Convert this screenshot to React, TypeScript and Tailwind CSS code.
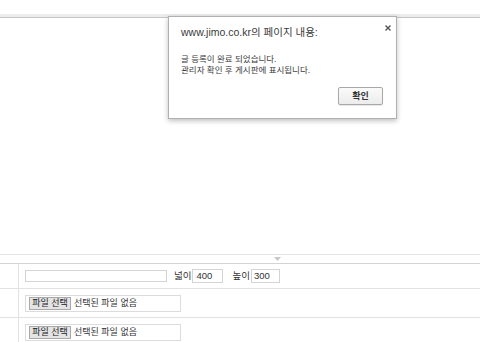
import React from "react";

const kr = { fontFamily: '"Liberation Sans", "Noto Sans CJK KR", sans-serif' };

function FileInput() {
  return (
    <div className="flex h-[17px] w-[156px] items-center border border-[#dcdcdc] bg-white pl-[3px]">
      <div className="flex h-[13px] w-[42px] items-center justify-center border border-[#a9a9a9] bg-[#e4e4e4] text-[9px] leading-none text-[#222]">
        파일 선택
      </div>
      <span className="ml-[3px] text-[9px] leading-none text-[#333]">선택된 파일 없음</span>
    </div>
  );
}

export default function App() {
  return (
    <div className="relative h-[342px] w-[480px] overflow-hidden bg-white" style={kr}>
      <div className="flex h-full flex-col">
        <div className="h-[14px]" />
        <div className="h-[4px] border-b border-[#c4c4c4] bg-[#ececec]" />
        <div className="h-[236px]" />
        <div className="h-px bg-[#e4e4e4]" />
        <div className="relative h-[8px] bg-white">
          <svg className="absolute left-[274px] top-[2px]" width="7" height="4" viewBox="0 0 7 4">
            <path d="M0 0 L7 0 L3.5 4 Z" fill="#c8c8c8" />
          </svg>
        </div>
        <div className="h-px bg-[#d4d4d4]" />
        {/* row 1 */}
        <div className="flex h-[25px] border-b border-[#e2e2e2]">
          <div className="w-[19px] border-r border-[#e2e2e2]" />
          <div className="flex items-center pl-[6px] text-[9.5px] text-[#333]">
            <div className="h-[12px] w-[142px] border border-[#d4d4d4] bg-white" />
            <span className="ml-[7px]">넓이</span>
            <div className="ml-[1px] flex h-[14px] w-[31px] items-center border border-[#d4d4d4] pl-[3px] leading-none">400</div>
            <span className="ml-[9px]">높이</span>
            <div className="ml-[1px] flex h-[14px] w-[29px] items-center border border-[#d4d4d4] pl-[2px] leading-none">300</div>
          </div>
        </div>
        {/* row 2 */}
        <div className="flex h-[29px] border-b border-[#e2e2e2]">
          <div className="w-[19px] border-r border-[#e2e2e2]" />
          <div className="flex items-center pl-[6px]">
            <FileInput />
          </div>
        </div>
        {/* row 3 */}
        <div className="flex flex-1">
          <div className="w-[19px] border-r border-[#e2e2e2]" />
          <div className="flex items-start pl-[6px] pt-[6px]">
            <FileInput />
          </div>
        </div>
      </div>

      {/* alert dialog */}
      <div className="absolute left-[168px] top-[16px] h-[103px] w-[229px] border border-[#b0b0b0] bg-white shadow-[0_2px_5px_rgba(0,0,0,0.25)]">
        <svg className="absolute left-[216px] top-[8px]" width="6" height="6" viewBox="0 0 6 6">
          <path d="M0.5 0.5 L5.5 5.5 M5.5 0.5 L0.5 5.5" stroke="#555" strokeWidth="1.4" />
        </svg>
        <div className="pl-[12px] pt-[8px] text-[10.5px] leading-[14px] text-[#3a3a3a]">
          www.jimo.co.kr의 페이지 내용:
        </div>
        <div className="mt-[15px] pl-[12px] text-[8.5px] leading-[11px] text-[#3a3a3a]">
          <div>글 등록이 완료 되었습니다.</div>
          <div>관리자 확인 후 게시판에 표시됩니다.</div>
        </div>
        <div className="absolute left-[169px] top-[70px] flex h-[18px] w-[45px] items-center justify-center rounded-[2px] border border-[#a8a8a8] bg-gradient-to-b from-[#fafafa] to-[#ececec] text-[9px] font-bold leading-none text-[#333] shadow-[0_1px_1px_rgba(0,0,0,0.1)]">
          확인
        </div>
      </div>
    </div>
  );
}
